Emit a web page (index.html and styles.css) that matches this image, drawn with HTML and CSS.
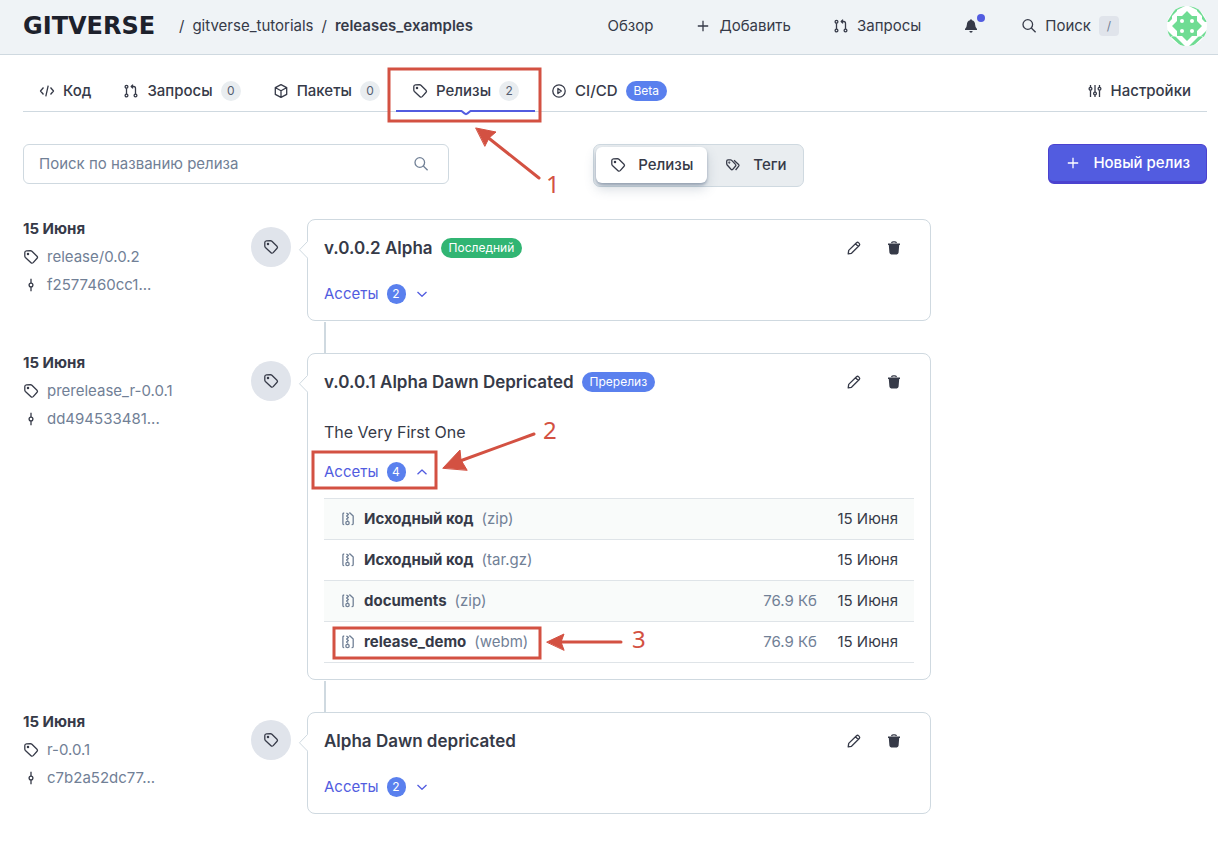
FILE: index.html
```html
<!DOCTYPE html>
<html lang="ru">
<head>
<meta charset="utf-8">
<meta name="viewport" content="width=device-width, initial-scale=1">
<title>Релизы · releases_examples</title>
<link rel="stylesheet" href="styles.css">
</head>
<body>
<svg class="sprite" aria-hidden="true">
  <symbol id="tag" viewBox="0 0 16 16"><path d="M1.8 7V3.6Q1.8 1.9 3.5 1.8L7.4 1.7Q8.3 1.7 8.9 2.3L14 7.2Q15 8.2 14.1 9.2L10.2 13.6Q9.1 14.7 8 13.7L2.4 8.5Q1.8 7.9 1.8 7Z"/><circle cx="5" cy="5" r=".6"/></symbol>
  <symbol id="tags" viewBox="0 0 16 16"><path d="M1.7 6.6V4.2Q1.7 2.9 3 2.9H5.5Q6.2 2.9 6.7 3.4L10.5 7.4Q11.3 8.2 10.6 9L7.8 12.3Q6.9 13.2 6 12.3L2.2 8Q1.7 7.4 1.7 6.6Z"/><path d="M9 3.2L13.6 7.4Q14.4 8.2 13.7 9.2L10.6 13"/><circle cx="4.3" cy="5.6" r=".4"/></symbol>
  <symbol id="code" viewBox="0 0 16 16"><path d="M4.5 4.5L1.5 8L4.5 11.5M11.5 4.5L14.5 8L11.5 11.5M9.2 2.7L6.8 13.3"/></symbol>
  <symbol id="pull" viewBox="0 0 16 16"><circle cx="3.5" cy="3.7" r="1.4"/><circle cx="3.5" cy="12.5" r="1.4"/><circle cx="12.5" cy="12.5" r="1.4"/><path d="M3.5 5.2V11M12.5 11V5.2Q12.5 3.5 10.8 3.5H8.3M10 1.6L8.2 3.5L10 5.4"/></symbol>
  <symbol id="box" viewBox="0 0 16 16"><path d="M8 1.6L13.7 4.6V11.4L8 14.4L2.3 11.4V4.6ZM2.5 4.7L8 7.7L13.5 4.7M8 7.7V14.2"/></symbol>
  <symbol id="play" viewBox="0 0 16 16"><circle cx="8" cy="8" r="6.2"/><path d="M6.9 5.4L10.3 8L6.9 10.6Z"/></symbol>
  <symbol id="sliders" viewBox="0 0 16 16"><path d="M3.5 2V4.2M3.5 7.2V14M8 2V9M8 12V14M12.5 2V4.2M12.5 7.2V14"/><circle cx="3.5" cy="5.7" r="1.4"/><circle cx="8" cy="10.5" r="1.4"/><circle cx="12.5" cy="5.7" r="1.4"/></symbol>
  <symbol id="plus" viewBox="0 0 16 16"><path d="M8 2.8V13.2M2.8 8H13.2"/></symbol>
  <symbol id="search" viewBox="0 0 16 16"><circle cx="6.8" cy="6.5" r="4.8"/><path d="M10.3 10L14.6 14.3"/></symbol>
  <symbol id="bell" viewBox="0 0 16 16"><path class="solid" d="M8 1.2Q8.9 1.2 9 2.2Q12 3 12.1 6.5Q12.2 9.4 14 11V12H2V11Q3.8 9.4 3.9 6.5Q4 3 7 2.2Q7.1 1.2 8 1.2ZM6.3 13H9.7Q9.4 14.7 8 14.7Q6.6 14.7 6.3 13Z"/></symbol>
  <symbol id="commit" viewBox="0 0 16 16"><circle cx="8" cy="8" r="1.9"/><path d="M8 1.8V6M8 10V14.2"/></symbol>
  <symbol id="pencil" viewBox="0 0 16 16"><path d="M2.2 13.8L2.7 10.4L10.5 2.7Q11.6 1.8 12.7 2.9L13.2 3.4Q14.2 4.5 13.3 5.5L5.5 13.3ZM9.5 3.7L12.3 6.5"/></symbol>
  <symbol id="trash" viewBox="0 0 16 16"><path class="solid" d="M2 3.6H14V5H13.2L12.6 12.6Q12.4 14.4 10.8 14.4H5.2Q3.6 14.4 3.4 12.6L2.8 5H2Z"/><path d="M5.6 3.2Q5.8 1.8 7 1.8H9Q10.2 1.8 10.4 3.2"/></symbol>
  <symbol id="down" viewBox="0 0 16 16"><path d="M3.5 6L8 10.3L12.5 6"/></symbol>
  <symbol id="up" viewBox="0 0 16 16"><path d="M3.5 10.3L8 6L12.5 10.3"/></symbol>
  <symbol id="zip" viewBox="0 0 16 16"><path d="M4.2 13.6Q2.9 13.6 2.9 12.4V3.2Q2.9 2 4.2 2M9.2 2H10L13.2 5V12.4Q13.2 13.6 11.6 13.6M6.4 2L8.4 3.4L6.6 5L8.4 6.4L6.6 8L8.2 9.4"/><circle cx="7.5" cy="12" r="1.7"/></symbol>
  <symbol id="notch" viewBox="0 0 10 18"><path class="notch-fill" d="M10 0L1 8.8L10 17.5Z"/><path d="M9.5 .5L1.5 8.8L9.5 17"/></symbol>
</svg>

<header class="header">
  <nav class="crumbs" aria-label="Навигация">
    <a class="logo" href="#">GITVERSE</a><span>/</span><a href="#">gitverse_tutorials</a><span>/</span><a class="current" href="#">releases_examples</a>
  </nav>
  <div class="menu">
    <a href="#">Обзор</a>
    <button type="button"><svg class="icon"><use href="#plus"/></svg>Добавить</button>
    <a href="#"><svg class="icon"><use href="#pull"/></svg>Запросы</a>
    <button type="button" class="bell" aria-label="Уведомления"><svg class="icon"><use href="#bell"/></svg></button>
    <button type="button"><svg class="icon"><use href="#search"/></svg>Поиск<kbd>/</kbd></button>
    <a class="avatar" href="#" aria-label="Профиль">
      <svg viewBox="0 0 40 40">
        <g class="green">
          <path d="M0 16L10 0V5L5 10V13L2 16ZM10 0L18 0L10 4ZM40 16L30 0V5L35 10V13L38 16ZM30 0L22 0L30 4ZM0 24L6 30H10L2 31ZM3 30L14 40H18L9 31ZM40 24L34 30H30L38 31ZM37 30L26 40H22L31 31Z"/>
          <path d="M10 10H15L20 5L25 10H30V15L35 20L30 25V30H25L20 35L15 30H10V25L5 20L10 15Z"/>
        </g>
        <circle cx="15" cy="15" r="2"/><circle cx="25" cy="15" r="2"/><circle cx="15" cy="25" r="2"/><circle cx="25" cy="25" r="2"/>
      </svg>
    </a>
  </div>
</header>

<main class="page">
  <nav class="tabs" aria-label="Разделы">
    <a href="#"><svg class="icon"><use href="#code"/></svg>Код</a>
    <a href="#"><svg class="icon"><use href="#pull"/></svg>Запросы<span class="count">0</span></a>
    <a href="#"><svg class="icon"><use href="#box"/></svg>Пакеты<span class="count">0</span></a>
    <a href="#" class="active" aria-current="page"><svg class="icon"><use href="#tag"/></svg>Релизы<span class="count">2</span>
      <svg class="tip" viewBox="0 0 12 6"><path class="tip-fill" d="M1 0L6 4.5L11 0Z"/><path d="M0 1H1.5L4.8 3.6Q6 4.6 7.2 3.6L10.5 1H12"/></svg></a>
    <a href="#"><svg class="icon"><use href="#play"/></svg>CI/CD<span class="pill blue">Beta</span></a>
    <a href="#" class="settings"><svg class="icon"><use href="#sliders"/></svg>Настройки</a>
  </nav>

  <div class="toolbar">
    <label class="search"><input type="text" placeholder="Поиск по названию релиза" aria-label="Поиск по названию релиза"><svg class="icon"><use href="#search"/></svg></label>
    <div class="switch">
      <button type="button" class="on"><svg class="icon"><use href="#tag"/></svg>Релизы</button>
      <button type="button"><svg class="icon"><use href="#tags"/></svg>Теги</button>
    </div>
    <button type="button" class="primary"><svg class="icon"><use href="#plus"/></svg>Новый релиз</button>
  </div>

  <section class="timeline">
    <article class="release">
      <div class="meta">
        <strong>15 Июня</strong>
        <a href="#"><svg class="icon"><use href="#tag"/></svg>release/0.0.2</a>
        <a href="#"><svg class="icon"><use href="#commit"/></svg>f2577460cc1...</a>
      </div>
      <div class="marker"><svg class="icon"><use href="#tag"/></svg></div>
      <div class="card">
        <svg class="notch"><use href="#notch"/></svg>
        <div class="card-head">
          <h2>v.0.0.2 Alpha</h2><span class="pill green">Последний</span>
          <div class="actions">
            <button type="button" aria-label="Изменить"><svg class="icon"><use href="#pencil"/></svg></button>
            <button type="button" aria-label="Удалить"><svg class="icon"><use href="#trash"/></svg></button>
          </div>
        </div>
        <button type="button" class="assets" aria-expanded="false">Ассеты<span class="count">2</span><svg class="icon"><use href="#down"/></svg></button>
      </div>
    </article>

    <article class="release">
      <div class="meta">
        <strong>15 Июня</strong>
        <a href="#"><svg class="icon"><use href="#tag"/></svg>prerelease_r-0.0.1</a>
        <a href="#"><svg class="icon"><use href="#commit"/></svg>dd494533481...</a>
      </div>
      <div class="marker"><svg class="icon"><use href="#tag"/></svg></div>
      <div class="card">
        <svg class="notch"><use href="#notch"/></svg>
        <div class="card-head">
          <h2>v.0.0.1 Alpha Dawn Depricated</h2><span class="pill blue">Пререлиз</span>
          <div class="actions">
            <button type="button" aria-label="Изменить"><svg class="icon"><use href="#pencil"/></svg></button>
            <button type="button" aria-label="Удалить"><svg class="icon"><use href="#trash"/></svg></button>
          </div>
        </div>
        <p>The Very First One</p>
        <button type="button" class="assets" aria-expanded="true">Ассеты<span class="count">4</span><svg class="icon"><use href="#up"/></svg></button>
        <table>
          <tr><td><a href="#"><svg class="icon"><use href="#zip"/></svg><b>Исходный код</b><span>(zip)</span></a></td><td class="size"></td><td class="date">15 Июня</td></tr>
          <tr><td><a href="#"><svg class="icon"><use href="#zip"/></svg><b>Исходный код</b><span>(tar.gz)</span></a></td><td class="size"></td><td class="date">15 Июня</td></tr>
          <tr><td><a href="#"><svg class="icon"><use href="#zip"/></svg><b>documents</b><span>(zip)</span></a></td><td class="size">76.9 Кб</td><td class="date">15 Июня</td></tr>
          <tr><td><a href="#"><svg class="icon"><use href="#zip"/></svg><b>release_demo</b><span>(webm)</span></a></td><td class="size">76.9 Кб</td><td class="date">15 Июня</td></tr>
        </table>
      </div>
    </article>

    <article class="release">
      <div class="meta">
        <strong>15 Июня</strong>
        <a href="#"><svg class="icon"><use href="#tag"/></svg>r-0.0.1</a>
        <a href="#"><svg class="icon"><use href="#commit"/></svg>c7b2a52dc77...</a>
      </div>
      <div class="marker"><svg class="icon"><use href="#tag"/></svg></div>
      <div class="card">
        <svg class="notch"><use href="#notch"/></svg>
        <div class="card-head">
          <h2>Alpha Dawn depricated</h2>
          <div class="actions">
            <button type="button" aria-label="Изменить"><svg class="icon"><use href="#pencil"/></svg></button>
            <button type="button" aria-label="Удалить"><svg class="icon"><use href="#trash"/></svg></button>
          </div>
        </div>
        <button type="button" class="assets" aria-expanded="false">Ассеты<span class="count">2</span><svg class="icon"><use href="#down"/></svg></button>
      </div>
    </article>
  </section>
</main>

<svg class="notes" width="700" height="700" viewBox="0 0 700 700">
  <rect x="389" y="69" width="151" height="52"/>
  <rect x="313" y="452" width="123" height="36"/>
  <rect x="334" y="628" width="206" height="30"/>
  <path d="M539 178L486 136M534 434L460 461M621 642H561"/>
  <path class="head" d="M476 128L496 132L489 138L485 146ZM443 468L460 450L461 460L467 470ZM547 642L564 634L561 642L564 650Z"/>
  <text x="546" y="193">1</text>
  <text x="543" y="439">2</text>
  <text x="632" y="648">3</text>
</svg>
</body>
</html>
```
FILE: styles.css
```css
* { box-sizing: border-box; }

body {
  margin: 0;
  background: #fff;
  color: #363a48;
  font: 15px/20px Inter, "Noto Sans", sans-serif;
}

a { color: inherit; text-decoration: none; }

button {
  margin: 0;
  padding: 0;
  border: 0;
  background: none;
  color: inherit;
  font: inherit;
  cursor: pointer;
}

.sprite { position: absolute; width: 0; height: 0; }

svg { fill: none; stroke: currentColor; stroke-width: 1.3; stroke-linejoin: round; }
.icon { width: 16px; height: 16px; flex: none; }
.solid { fill: currentColor; stroke: none; }

.header {
  display: flex;
  align-items: center;
  justify-content: space-between;
  min-height: 55px;
  padding: 0 11px 2px 23px;
  border-bottom: 1px solid #cfd9e0;
  background: #eff3f6;
}

.crumbs { display: flex; align-items: center; gap: 8px; }
.logo {
  min-width: 148px;
  color: #1d212c;
  font: bold 24px/20px "DejaVu Sans", sans-serif;
}
.current { font-weight: 600; }

.menu { display: flex; align-items: center; gap: 42px; }
.menu > * { display: flex; align-items: center; gap: 8px; }
.bell { position: relative; }
.bell::after {
  content: "";
  position: absolute;
  top: -4px;
  right: -6px;
  width: 8px;
  height: 8px;
  border-radius: 50%;
  background: #525ce0;
}
kbd {
  width: 20px;
  border-radius: 4px;
  background: #e0e4eb;
  color: #718096;
  font: 12px/20px Inter, sans-serif;
  text-align: center;
}
.avatar {
  width: 40px;
  height: 40px;
  margin-left: 6px;
  overflow: hidden;
  border-radius: 50%;
  background: #fff;
}
.avatar svg { stroke: none; fill: #fff; }
.avatar .green { fill: #6fdc93; }

.page { padding: 15px 11px 40px 23px; }

.tabs {
  display: flex;
  border-bottom: 1px solid #cfd9e0;
  font-weight: 500;
}
.tabs > a {
  position: relative;
  display: flex;
  align-items: center;
  gap: 8px;
  height: 41px;
  padding: 0 16px;
}
.tabs .settings { margin-left: auto; }
.active::after {
  content: "";
  position: absolute;
  left: 0;
  right: 0;
  bottom: -1px;
  height: 2px;
  background: #525ce0;
}
.tip {
  position: absolute;
  z-index: 1;
  left: 50%;
  bottom: -5px;
  width: 12px;
  height: 6px;
  margin-left: -6px;
  color: #525ce0;
  stroke-width: 2;
}
.tip-fill { fill: #fff; stroke: none; }

.count {
  min-width: 20px;
  padding: 0 5px;
  border-radius: 10px;
  background: #e9edf0;
  color: #555e70;
  font: 12px/20px Inter, sans-serif;
  text-align: center;
}
.pill {
  padding: 0 8px;
  border-radius: 10px;
  color: #fff;
  font: 12px/20px Inter, sans-serif;
}
.blue { background: #5a80ee; }
.green.pill { background: #31b573; }

.toolbar {
  display: grid;
  grid-template-columns: 36% 1fr auto;
  align-items: start;
  margin: 32px 0;
  height: 43px;
}
.search {
  display: flex;
  align-items: center;
  height: 40px;
  padding: 0 19px 0 15px;
  border: 1px solid #cfd9e0;
  border-radius: 6px;
  color: #718096;
}
.search input {
  flex: 1;
  min-width: 0;
  padding: 0;
  border: 0;
  outline: 0;
  background: none;
  font: inherit;
}
.search input::placeholder { color: #718096; opacity: 1; }
.switch {
  display: flex;
  justify-self: start;
  margin-left: 144px;
  padding: 2px 2px 3px;
  border: 1px solid #cfd9e0;
  border-radius: 7px;
  background: #e9edf0;
  font-weight: 500;
}
.switch button {
  display: flex;
  align-items: center;
  gap: 12px;
  height: 36px;
  padding: 0 14px 0 18px;
  border-radius: 6px;
}
.switch .on {
  padding-left: 14px;
  background: #fff;
  box-shadow: 0 2px 3px rgba(70, 90, 120, .4), 0 6px 12px rgba(70, 90, 120, .22);
}
.primary {
  display: flex;
  align-items: center;
  gap: 12px;
  height: 40px;
  padding: 0 16px;
  border: 1px solid #4b42cf;
  border-bottom-width: 3px;
  border-radius: 6px;
  background: #525ce0;
  color: #fff;
  font-weight: 500;
}

.timeline { display: grid; gap: 32px; max-width: 908px; }
.release {
  display: grid;
  grid-template-columns: 228px 40px 1fr;
  align-items: start;
}
.meta { display: grid; gap: 8px; color: #718096; }
.meta strong { color: #363a48; font-weight: 700; }
.meta a { display: flex; align-items: center; gap: 8px; }
.meta .icon { color: #363a48; }
.marker {
  display: grid;
  place-items: center;
  width: 40px;
  height: 40px;
  margin-top: 8px;
  border-radius: 50%;
  background: #e0e4eb;
}
.card {
  position: relative;
  display: grid;
  gap: 16px;
  justify-items: start;
  margin-left: 16px;
  padding: 8px 16px 16px;
  border: 1px solid #cfd9e0;
  border-radius: 8px;
}
.release:not(:last-child) .card::after {
  content: "";
  position: absolute;
  top: calc(100% + 2px);
  left: 16px;
  width: 2px;
  height: 31px;
  background: #cfd9e0;
}
.notch {
  position: absolute;
  top: 21px;
  left: -10px;
  width: 10px;
  height: 18px;
  color: #cfd9e0;
  stroke-width: 1;
}
.notch-fill { fill: #fff; stroke: none; }
.card-head { display: flex; align-items: center; gap: 8px; width: 100%; }
h2 { margin: 0; font-size: 17px; font-weight: 600; line-height: 24px; }
.actions { display: flex; margin-left: auto; }
.actions button { display: grid; place-items: center; width: 40px; height: 40px; }
.card p { margin: 0; font-size: 16px; line-height: 28px; }
.assets { display: flex; align-items: center; gap: 8px; color: #525ce0; }
.assets .count { min-width: 19px; background: #5a80ee; color: #fff; }

table { width: 100%; border-collapse: collapse; }
tr { height: 41px; border-top: 1px solid #dfe4e8; border-bottom: 1px solid #dfe4e8; }
tr:nth-child(odd) { background: #f9fbfa; }
td { padding: 0; }
td a { display: flex; align-items: center; gap: 8px; padding-left: 16px; color: #718096; }
td b { color: #363a48; font-weight: 700; }
.size { color: #718096; text-align: right; }
.date { width: 97px; padding-right: 16px; text-align: right; }

.notes {
  position: absolute;
  top: 0;
  left: 0;
  color: #d35142;
  stroke-width: 3;
  stroke-linejoin: miter;
  pointer-events: none;
}
.notes path { stroke-linecap: round; }
.notes .head { fill: currentColor; stroke-width: 1; }
.notes text { fill: currentColor; stroke: none; font: 24px "Noto Sans", sans-serif; }
```
